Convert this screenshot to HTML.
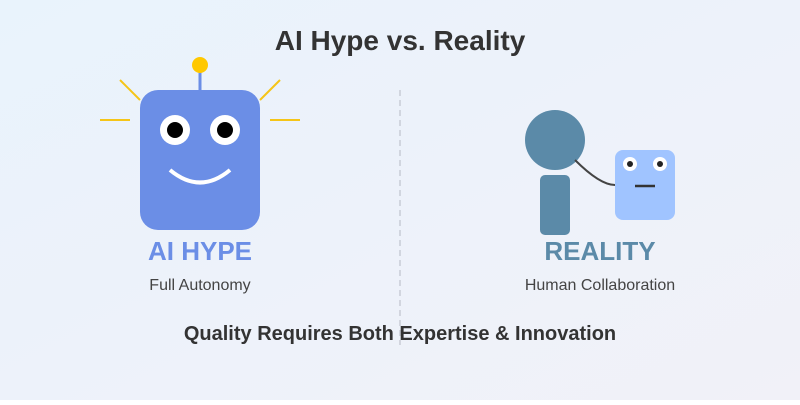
<!DOCTYPE html><html><head><style>body{margin:0}</style></head><body>
<svg width="800" height="400" xmlns="http://www.w3.org/2000/svg" font-family="Liberation Sans, sans-serif">
<defs><linearGradient id="g" x1="0" y1="0" x2="1" y2="1"><stop offset="0" stop-color="#e9f3fc"/><stop offset="1" stop-color="#f1f1f8"/></linearGradient></defs>
<rect width="800" height="400" fill="url(#g)"/>
<text x="400" y="50" text-anchor="middle" font-size="28" font-weight="bold" fill="#333">AI Hype vs. Reality</text>
<line x1="400" y1="90" x2="400" y2="345" stroke="#c8ccd6" stroke-width="1.5" stroke-dasharray="6,4"/>
<g stroke="#f5c518" stroke-width="2"><line x1="120" y1="80" x2="140" y2="100"/><line x1="100" y1="120" x2="130" y2="120"/><line x1="280" y1="80" x2="260" y2="100"/><line x1="270" y1="120" x2="300" y2="120"/></g>
<line x1="200" y1="70" x2="200" y2="90" stroke="#6b8ee6" stroke-width="3"/>
<circle cx="200" cy="65" r="8" fill="#ffc800"/>
<rect x="140" y="90" width="120" height="140" rx="18" fill="#6b8ee6"/>
<circle cx="175" cy="130" r="15" fill="#fff"/><circle cx="175" cy="130" r="8" fill="#000"/>
<circle cx="225" cy="130" r="15" fill="#fff"/><circle cx="225" cy="130" r="8" fill="#000"/>
<path d="M170 170 Q200 195 230 170" stroke="#fff" stroke-width="4" fill="none"/>
<text x="200" y="260" text-anchor="middle" font-size="26" font-weight="bold" fill="#6b8ee6">AI HYPE</text>
<text x="200" y="290" text-anchor="middle" font-size="16" fill="#444">Full Autonomy</text>
<circle cx="555" cy="140" r="30" fill="#5b8aa8"/>
<rect x="540" y="175" width="30" height="60" rx="5" fill="#5b8aa8"/>
<path d="M575 160 Q600 185 615 185" stroke="#444" stroke-width="2" fill="none"/>
<rect x="615" y="150" width="60" height="70" rx="8" fill="#a0c4ff"/>
<circle cx="630" cy="164" r="7" fill="#fff"/><circle cx="630" cy="164" r="3" fill="#222"/>
<circle cx="660" cy="164" r="7" fill="#fff"/><circle cx="660" cy="164" r="3" fill="#222"/>
<line x1="635" y1="186" x2="655" y2="186" stroke="#333" stroke-width="2.5"/>
<text x="600" y="260" text-anchor="middle" font-size="26" font-weight="bold" fill="#5b8aa8">REALITY</text>
<text x="600" y="290" text-anchor="middle" font-size="16" fill="#444">Human Collaboration</text>
<text x="400" y="340" text-anchor="middle" font-size="20" font-weight="bold" fill="#333">Quality Requires Both Expertise &amp; Innovation</text>
</svg></body></html>
